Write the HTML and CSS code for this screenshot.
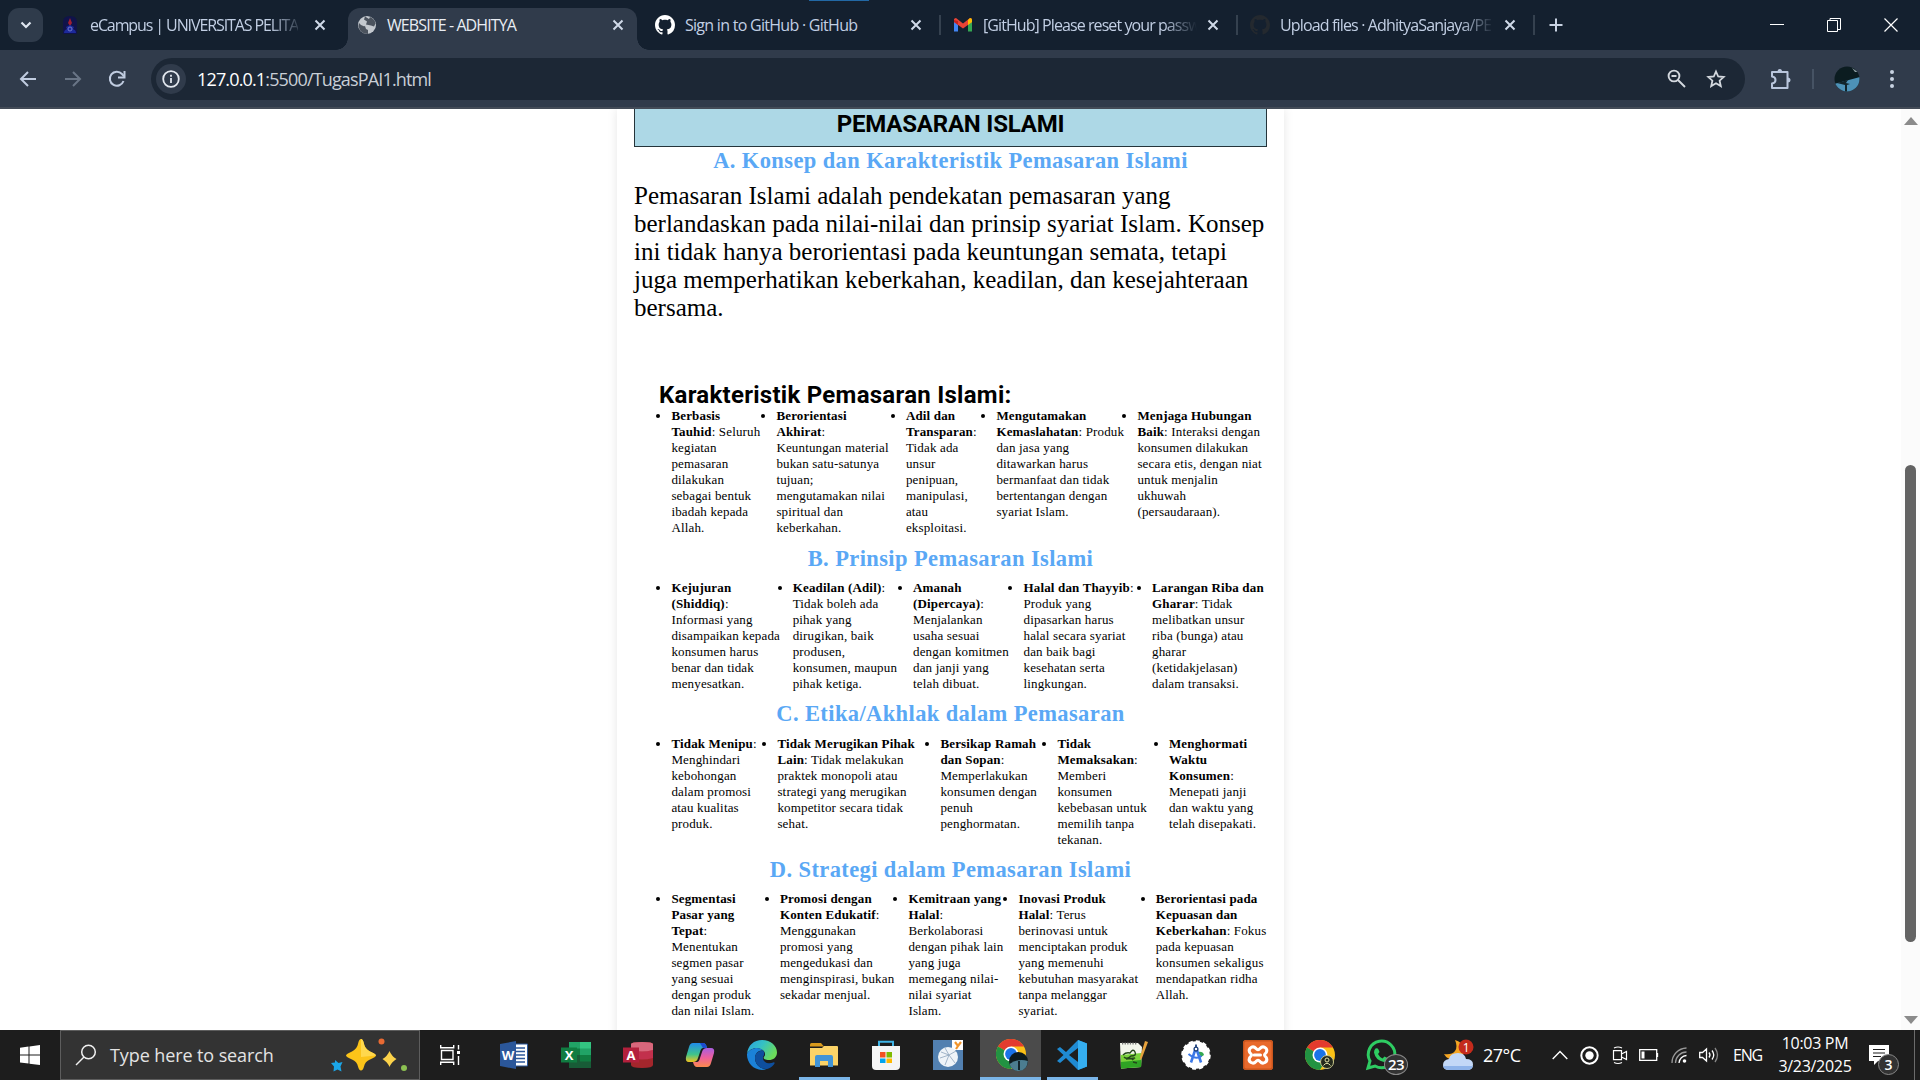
FILE: index.html
```html
<!DOCTYPE html>
<html lang="id">
<head>
<meta charset="utf-8">
<title>WEBSITE - ADHITYA</title>
<link rel="stylesheet" href="styles.css">
</head>
<body>
<svg class="defs" width="0" height="0">
  <defs>
    <symbol id="i-close" viewBox="0 0 12 12"><path d="M1.5 1.5l9 9M10.500 1.500l-9 9" fill="none" stroke="currentColor" stroke-width="2"/></symbol>
    <symbol id="i-github" viewBox="0 0 16 16"><path fill="currentColor" d="M8 0C3.580 0 0 3.580 0 8c0 3.540 2.290 6.530 5.470 7.590.4.070.55-.17.55-.38 0-.19-.01-.82-.01-1.490-2.010.37-2.530-.49-2.690-.94-.09-.23-.48-.94-.82-1.130-.28-.15-.68-.52-.01-.53.63-.01 1.080.58 1.230.82.72 1.210 1.870.87 2.330.66.070-.52.28-.87.51-1.070-1.780-.2-3.640-.89-3.640-3.950 0-.87.31-1.590.82-2.150-.08-.2-.36-1.020.08-2.120 0 0 .67-.21 2.200.82.64-.18 1.320-.27 2-.27s1.360.09 2 .27c1.530-1.040 2.200-.82 2.200-.82.44 1.100.16 1.920.08 2.120.51.56.82 1.270.82 2.150 0 3.070-1.870 3.750-3.650 3.950.29.25.54.73.54 1.480 0 1.070-.01 1.930-.01 2.200 0 .21.15.46.55.38A8.010 8.010 0 0 0 16 8c0-4.420-3.580-8-8-8z"/></symbol>
    <symbol id="i-chrome" viewBox="0 0 30 30">
      <circle cx="15" cy="15" r="15" fill="#fbc116"/>
      <path d="M15 15L2 7.500A15 15 0 0 1 28 7.500H15z" fill="#e33b2e"/>
      <path d="M15 15L2 7.500A15 15 0 0 0 15 30L21.500 18.700z" fill="#229342"/>
      <circle cx="15" cy="15" r="7.500" fill="#fff"/><circle cx="15" cy="15" r="5.900" fill="#1a73e8"/>
    </symbol>
  </defs>
</svg>

<div class="browser">
  <div class="tabstrip">
    <div class="tab-search"><svg width="12" height="8" viewBox="0 0 12 8"><path d="M1.500 1.500L6 6l4.500-4.500" fill="none" stroke="#dfe6f0" stroke-width="2.200"/></svg></div>
    <div class="tab first">
      <svg class="fav" width="20" height="20" viewBox="0 0 20 20"><path d="M3 19V7q0-6 7-6t7 6v12z" fill="#10134a"/><path d="M10 3l2 5-2 3-2-3z" fill="#a01f32"/><path d="M4 18q0-3 3-4l-1-2 4-2 4 2-1 2q3 1 3 4z" fill="#1d2a9c"/><circle cx="10" cy="14" r="2" fill="none" stroke="#7079c8"/></svg>
      <span class="title t1">eCampus | UNIVERSITAS PELITA</span><svg class="x" width="12" height="12"><use href="#i-close"/></svg>
    </div>
    <div class="tab active">
      <svg class="fav" width="20" height="20" viewBox="0 0 20 20"><circle cx="10" cy="10" r="9" fill="#c3c8ce"/><path d="M2 8q3 4 6 3l1 3 2 1v4q-8 0-9.500-8zM8 1.500l-1 3 3 2-1 3 5 1 3 1 1.500-3Q18 4 13 2l-1 2z" fill="#4b535e"/></svg>
      <span class="title t2">WEBSITE - ADHITYA</span><svg class="x" width="12" height="12"><use href="#i-close"/></svg>
    </div>
    <div class="tab"><svg class="fav white" width="20" height="20"><use href="#i-github"/></svg><span class="title t3">Sign in to GitHub · GitHub</span><svg class="x" width="12" height="12"><use href="#i-close"/></svg></div>
    <div class="tab sep">
      <svg class="fav" width="20" height="20" viewBox="0 0 20 20"><path d="M1 4v12.500h4V8z" fill="#4285f4"/><path d="M19 4v12.500h-4V8z" fill="#34a853"/><path d="M1 7V4.500Q1 3 3 3l7 5.500L17 3q2 0 2 2v2l-9 6.500z" fill="#ea4335"/><path d="M15 5l2-2q2 0 2 2v2l-4 3z" fill="#fbbc04"/><path d="M1 7V5l4 1v4z" fill="#c5221f"/></svg>
      <span class="title t4">[GitHub] Please reset your passw</span><svg class="x" width="12" height="12"><use href="#i-close"/></svg></div>
    <div class="tab sep"><svg class="fav dark" width="20" height="20"><use href="#i-github"/></svg><span class="title t5">Upload files · AdhityaSanjaya/PE</span><svg class="x" width="12" height="12"><use href="#i-close"/></svg></div>
    <div class="newtab"><svg width="14" height="14" viewBox="0 0 14 14"><path d="M7 .5v13M.5 7h13" stroke="#c8d2e2" stroke-width="2"/></svg></div>
    <div class="winbtns">
      <svg width="14" height="14" viewBox="0 0 14 14"><path d="M0 6.500h14" stroke="#fff"/></svg>
      <svg width="14" height="14" viewBox="0 0 14 14"><path d="M.5 2.500h10v11H.5zM3 2.500v-2h10.500v11H11" fill="none" stroke="#fff"/></svg>
      <svg width="14" height="14" viewBox="0 0 14 14"><path d="M.5.5l13 13M13.500.5l-13 13" stroke="#fff" stroke-width="1.200"/></svg>
    </div>
    <div class="top-mark"></div>
  </div>
  <div class="toolbar">
    <svg class="nav" width="18" height="16" viewBox="0 0 18 16"><path d="M9 1L2 8l7 7M2 8h15" fill="none" stroke="#c0cce0" stroke-width="2"/></svg>
    <svg class="nav" width="18" height="16" viewBox="0 0 18 16"><path d="M9 1l7 7-7 7M16 8H1" fill="none" stroke="#697586" stroke-width="2"/></svg>
    <svg class="nav" width="18" height="18" viewBox="0 0 18 18"><path d="M15.500 11A7 7 0 1 1 14 4l2 2.300" fill="none" stroke="#c0cce0" stroke-width="2"/><path d="M16.500 1v6.500H10" fill="none" stroke="#c0cce0" stroke-width="2"/></svg>
    <div class="omnibox">
      <div class="info"><svg width="18" height="18" viewBox="0 0 18 18"><circle cx="9" cy="9" r="7.800" fill="none" stroke="#e3e8ef" stroke-width="1.800"/><path d="M9 8v5M9 4.800v2" stroke="#e3e8ef" stroke-width="1.800"/></svg></div>
      <span class="url"><b>127.0.0.1</b>:5500/TugasPAI1.html</span>
      <svg class="zoomi" width="19" height="19" viewBox="0 0 19 19"><circle cx="7" cy="7" r="5.400" fill="none" stroke="#d3d8de" stroke-width="1.900"/><path d="M11 11l7 7M4.500 7h5" stroke="#d3d8de" stroke-width="1.900"/></svg>
      <svg width="20" height="20" viewBox="0 0 20 20"><path d="M10 2.500l2.200 5 5.500.5-4.100 3.700 1.200 5.400-4.800-2.900-4.800 2.900 1.200-5.400L2.300 8l5.500-.5z" fill="none" stroke="#d3d8de" stroke-width="1.800"/></svg>
    </div>
    <svg class="puzzle" width="22" height="22" viewBox="0 0 22 22"><path d="M2 4h15.500v16H2v-4.500q3.500-.5 3.500-3.500T2 8.500z" fill="none" stroke="#b9c6dd" stroke-width="2" stroke-linejoin="round"/><path d="M7.500 4a2.300 3 0 0 1 4.600 0zM17.500 9.500a3 2.500 0 0 1 0 5z" fill="#b9c6dd"/></svg>
    <i class="vline"></i>
    <svg class="avatar" width="26" height="26" viewBox="0 0 26 26"><defs><clipPath id="av"><circle cx="13" cy="13" r="12.500"/></clipPath></defs><g clip-path="url(#av)"><path fill="#0b1c20" d="M0 0h26v26H0z"/><path d="M0 18l26-7v15H0z" fill="#4d92b8"/><path d="M3 17l11-3-2 3 4 1-3 1v7h-2v-7z" fill="#12242b"/><path d="M18 2l6 4-3 0z" fill="#8fa0a5"/></g></svg>
    <svg class="dots" width="6" height="20" viewBox="0 0 6 20"><g fill="#c8d2e2"><circle cx="3" cy="3" r="2"/><circle cx="3" cy="10" r="2"/><circle cx="3" cy="17" r="2"/></g></svg>
  </div>
</div>

<div class="viewport">
  <main class="page">
    <h1>PEMASARAN ISLAMI</h1>
    <h2 class="lead">A. Konsep dan Karakteristik Pemasaran Islami</h2>
    <p>Pemasaran Islami adalah pendekatan pemasaran yang<br>berlandaskan pada nilai-nilai dan prinsip syariat Islam. Konsep<br>ini tidak hanya berorientasi pada keuntungan semata, tetapi<br>juga memperhatikan keberkahan, keadilan, dan kesejahteraan<br>bersama.</p>
    <h3>Karakteristik Pemasaran Islami:</h3>
    <ul class="list-a">
      <li><b>Berbasis<br>Tauhid</b>: Seluruh<br>kegiatan<br>pemasaran<br>dilakukan<br>sebagai bentuk<br>ibadah kepada<br>Allah.</li>
      <li><b>Berorientasi<br>Akhirat</b>:<br>Keuntungan material<br>bukan satu-satunya<br>tujuan;<br>mengutamakan nilai<br>spiritual dan<br>keberkahan.</li>
      <li><b>Adil dan<br>Transparan</b>:<br>Tidak ada<br>unsur<br>penipuan,<br>manipulasi,<br>atau<br>eksploitasi.</li>
      <li><b>Mengutamakan<br>Kemaslahatan</b>: Produk<br>dan jasa yang<br>ditawarkan harus<br>bermanfaat dan tidak<br>bertentangan dengan<br>syariat Islam.</li>
      <li><b>Menjaga Hubungan<br>Baik</b>: Interaksi dengan<br>konsumen dilakukan<br>secara etis, dengan niat<br>untuk menjalin<br>ukhuwah<br>(persaudaraan).</li>
    </ul>
    <h2>B. Prinsip Pemasaran Islami</h2>
    <ul class="list-b">
      <li><b>Kejujuran<br>(Shiddiq)</b>:<br>Informasi yang<br>disampaikan kepada<br>konsumen harus<br>benar dan tidak<br>menyesatkan.</li>
      <li><b>Keadilan (Adil)</b>:<br>Tidak boleh ada<br>pihak yang<br>dirugikan, baik<br>produsen,<br>konsumen, maupun<br>pihak ketiga.</li>
      <li><b>Amanah<br>(Dipercaya)</b>:<br>Menjalankan<br>usaha sesuai<br>dengan komitmen<br>dan janji yang<br>telah dibuat.</li>
      <li><b>Halal dan Thayyib</b>:<br>Produk yang<br>dipasarkan harus<br>halal secara syariat<br>dan baik bagi<br>kesehatan serta<br>lingkungan.</li>
      <li><b>Larangan Riba dan<br>Gharar</b>: Tidak<br>melibatkan unsur<br>riba (bunga) atau<br>gharar<br>(ketidakjelasan)<br>dalam transaksi.</li>
    </ul>
    <h2>C. Etika/Akhlak dalam Pemasaran</h2>
    <ul class="list-c">
      <li><b>Tidak Menipu</b>:<br>Menghindari<br>kebohongan<br>dalam promosi<br>atau kualitas<br>produk.</li>
      <li><b>Tidak Merugikan Pihak<br>Lain</b>: Tidak melakukan<br>praktek monopoli atau<br>strategi yang merugikan<br>kompetitor secara tidak<br>sehat.</li>
      <li><b>Bersikap Ramah<br>dan Sopan</b>:<br>Memperlakukan<br>konsumen dengan<br>penuh<br>penghormatan.</li>
      <li><b>Tidak<br>Memaksakan</b>:<br>Memberi<br>konsumen<br>kebebasan untuk<br>memilih tanpa<br>tekanan.</li>
      <li><b>Menghormati<br>Waktu<br>Konsumen</b>:<br>Menepati janji<br>dan waktu yang<br>telah disepakati.</li>
    </ul>
    <h2>D. Strategi dalam Pemasaran Islami</h2>
    <ul class="list-d">
      <li><b>Segmentasi<br>Pasar yang<br>Tepat</b>:<br>Menentukan<br>segmen pasar<br>yang sesuai<br>dengan produk<br>dan nilai Islam.</li>
      <li><b>Promosi dengan<br>Konten Edukatif</b>:<br>Menggunakan<br>promosi yang<br>mengedukasi dan<br>menginspirasi, bukan<br>sekadar menjual.</li>
      <li><b>Kemitraan yang<br>Halal</b>:<br>Berkolaborasi<br>dengan pihak lain<br>yang juga<br>memegang nilai-<br>nilai syariat<br>Islam.</li>
      <li><b>Inovasi Produk<br>Halal</b>: Terus<br>berinovasi untuk<br>menciptakan produk<br>yang memenuhi<br>kebutuhan masyarakat<br>tanpa melanggar<br>syariat.</li>
      <li><b>Berorientasi pada<br>Kepuasan dan<br>Keberkahan</b>: Fokus<br>pada kepuasan<br>konsumen sekaligus<br>mendapatkan ridha<br>Allah.</li>
    </ul>
  </main>
  <div class="scrollbar">
    <svg width="14" height="8" viewBox="0 0 14 8"><path d="M7 0l7 8H0z" fill="#8b8b8b"/></svg>
    <div class="thumb"></div>
    <svg width="14" height="8" viewBox="0 0 14 8"><path d="M7 8l7-8H0z" fill="#8b8b8b"/></svg>
  </div>
</div>

<div class="taskbar">
  <div class="start"><svg width="20" height="20" viewBox="0 0 20 20"><path fill="#fff" d="M0 2.800l8.500-1.200v8H0zM9.500 1.400L20 0v9.600H9.500zM0 10.600h8.500v8L0 17.400zM9.500 10.600H20V20L9.500 18.700z"/></svg></div>
  <div class="search">
    <svg width="22" height="22" viewBox="0 0 22 22"><circle cx="13.500" cy="8" r="6.800" fill="none" stroke="#f0f0f0" stroke-width="1.500"/><path d="M9 13l-8 8" stroke="#f0f0f0" stroke-width="1.500"/></svg>
    <span class="ph">Type here to search</span>
    <svg class="stars" width="78" height="34" viewBox="0 0 78 34"><path d="M30 1q2 0 3 5 1 5 6 7.500 6 2.500 6 4t-6 4q-5 2-6 7-1 4-3 4t-3-4q-1-5-6-7-6-2.500-6-4t6-4q5-2.500 6-7.500 1-5 3-5z" fill="#fcc419"/><path d="M30 1q2 0 3 5 1 5 6 7.500 6 2.500 6 4L30 19z" fill="#ffd84d"/><path d="M58.500 13q2 5 7 8-5 3-7 8-2-5-7-8 5-3 7-8z" fill="#fbd24a"/><path d="M4 22l3.500 3 4-1-2 4.500 1 5-4-2-4 2 .5-5-3-3.500 4-.5z" fill="#1ba6e8"/><circle cx="50.500" cy="3.500" r="3" fill="#e86a33"/><circle cx="73" cy="30" r="3" fill="#8cc152"/></svg>
  </div>
  <div class="app tv"><svg width="20" height="20" viewBox="0 0 20 20"><path d="M.7 0v2.700h13V0M.7 20v-2.700h13V20M1.500 5.500h11.500v9H1.500zM18.500 0v4.500M18.500 11v9" fill="none" stroke="#fff" stroke-width="1.400"/><path d="M17 6h3v3h-3z" fill="#fff"/></svg></div>
  <div class="app"><svg width="28" height="28" viewBox="0 0 28 28"><path d="M14 3h13.500v22H14z" fill="#fff" stroke="#2b579a"/><path d="M16 7h9M16 10.500h9M16 14h9M16 17.500h9M16 21h9" stroke="#2b579a" stroke-width="1.600"/><path d="M0 3l16-3v28L0 25z" fill="#2b579a"/><text x="8" y="19" class="glyph w">W</text></svg></div>
  <div class="app"><svg width="30" height="28" viewBox="0 0 30 28"><path d="M8 1h11v7H8z" fill="#21a366"/><path d="M19 1h11v7H19z" fill="#33c481"/><path d="M8 7.500h11V14H8z" fill="#107c41"/><path d="M19 7.500h11V14H19z" fill="#21a366"/><path d="M8 14h11v7H8z" fill="#185c37"/><path d="M19 14h11v7H19z" fill="#107c41"/><path d="M8 20.500h22V27H8z" fill="#185c37"/><path d="M0 6.500h16v15H0z" fill="#107c41"/><text x="8" y="19" class="glyph">X</text></svg></div>
  <div class="app"><svg width="30" height="28" viewBox="0 0 30 28"><path d="M8 3q0-2 11-2t11 2v21q0 3-11 3T8 24z" fill="#a4262c"/><path d="M8 9q11 3 22 0v8q-11 3-22 0z" fill="#c2304c"/><path d="M8 3q0-2 11-2t11 2v6q-11 3-22 0z" fill="#d9677c"/><path d="M0 6.500h16v15H0z" fill="#b3203c"/><text x="8" y="19" class="glyph">A</text></svg></div>
  <div class="app"><svg width="30" height="28" viewBox="0 0 30 28"><defs><linearGradient id="cp1" x1="0" y1="0" x2="0" y2="1"><stop offset="0" stop-color="#1f8bea"/><stop offset=".6" stop-color="#3fc48b"/><stop offset="1" stop-color="#f2c51d"/></linearGradient><linearGradient id="cp2" x1="0" y1="1" x2="0" y2="0"><stop offset="0" stop-color="#fb8a4c"/><stop offset=".5" stop-color="#ee5f9e"/><stop offset="1" stop-color="#a85ee0"/></linearGradient></defs><path d="M8 2h10q3 0 4 5h-4q-2 0-3 4l-2 6q-1 4-5 4H4q-4 0-3-5L4 6q1-4 4-4z" fill="url(#cp1)"/><path d="M22 26H12q-3 0-4-5h4q2 0 3-4l2-6q1-4 5-4h4q4 0 3 5l-3 10q-1 4-4 4z" fill="url(#cp2)"/><path d="M15 2h3q3 0 4 5h-4z" fill="#1c4bd0"/></svg></div>
  <div class="app"><svg width="30" height="30" viewBox="0 0 30 30"><defs><linearGradient id="eg" x1="0" y1="0" x2="1" y2=".5"><stop offset="0" stop-color="#2a9fe0"/><stop offset=".5" stop-color="#35c1c4"/><stop offset="1" stop-color="#6cdc5a"/></linearGradient></defs><path d="M0 14C1 5 7 0 15 0c9 0 15 6 15 12.500 0 5-4 7.500-8 7.500-5 0-6-2-5-3.200 1.500-1.600 1.500-4-.5-6C11 6 3 8 0 14z" fill="url(#eg)"/><path d="M0 14c3-6 12-8 16.500-3.200-4-1.300-8.500 2-8.500 7.200 0 6 5 11 11.500 11.300Q17 30 15 30C6 30-.5 22 0 14z" fill="#1b82d8"/><path d="M16.500 10.800C12 10 8 13 8 18c0 7 7 12.500 13 10.800 3-1 5.500-3.300 6.500-5.300.5-1-.4-1.500-1.300-1-5 2.300-10.700-.5-10.200-5 .1-2 2.500-3 .5-6.700z" fill="#0e4f9e"/></svg></div>
  <div class="app run"><svg width="28" height="24" viewBox="0 0 28 24"><path d="M0 1.500Q0 0 1.500 0H11l3 3.500H0z" fill="#d99a1c"/><path d="M0 5h12l2-2h13q1 0 1 1v18.500H0z" fill="#fbd367"/><path d="M5 14q0-2 2-2h14q2 0 2 2v10h-5v-6h-8v6H5z" fill="#4194d6"/></svg></div>
  <div class="app"><svg width="30" height="30" viewBox="0 0 30 30"><path d="M8 7V1.800h14V7" fill="none" stroke="#3fb4e6" stroke-width="2"/><path d="M1 6h28v20q0 4-4 4H5q-4 0-4-4z" fill="#f5f5f5"/><path d="M9 12h5.500v5.500H9z" fill="#f25022"/><path d="M15.500 12H21v5.500h-5.500z" fill="#7fba00"/><path d="M9 18.500h5.500V23H9z" fill="#00a4ef"/><path d="M15.500 18.500H21V23h-5.500z" fill="#ffb900"/></svg></div>
  <div class="app"><svg width="30" height="30" viewBox="0 0 30 30"><path d="M0 0h30v30H0z" fill="#5280b0"/><path d="M19 0h11v10H19z" fill="#fff"/><path d="M22 2l3 4 3-4M25 6l-2 3" fill="none" stroke="#f2952c" stroke-width="2.200"/><circle cx="15" cy="17" r="10" fill="#eef3f8"/><path d="M8 12l8 3 7-4M16 15l-4 10M16 15l6 8M7 18l9-3M12 8l4 7" stroke="#8ea4bc" stroke-width=".8" fill="none"/></svg></div>
  <div class="app run wide current"><svg width="32" height="32" viewBox="0 0 32 32"><use href="#i-chrome" width="30" height="30"/><circle cx="22.500" cy="22.500" r="9.500" fill="#0d1a1d"/><path d="M13.500 25q9-6 18.300-3-.3 9.500-9.300 10-7 0-9-7z" fill="#4c7d90"/><path d="M22 22h2v9h-2z" fill="#12242b"/></svg></div>
  <div class="app run"><svg width="30" height="30" viewBox="0 0 30 30"><path d="M21 0l9 3.500v23L21 30 9 18l-6 5-3-2 6.500-6L0 9l3-2 6 5z" fill="#1f8ad2"/><path d="M21 8v14l-9-7z" fill="#1e1e1e"/><path d="M21 0l9 3.500v23L21 30z" fill="#35aef0"/></svg></div>
  <div class="app"><svg width="30" height="30" viewBox="0 0 30 30"><path d="M1 3h18l4 4-1 20-20 1.500z" fill="#f3f6ec"/><path d="M1.700 15l21-2-.7 14-20 1.500z" fill="#7bd43c"/><path d="M1.900 22l20.500-2-.4 7-20 1.500z" fill="#2fa324"/><path d="M3 3.500h15" stroke="#777" stroke-width="2" stroke-dasharray="1.300 1.300"/><path d="M4 15q3-3 7-2 3-5 5-1t-4 4q-4 4-7 1M7 19l9-1-3 2M14 22l4 1" fill="none" stroke="#23481b" stroke-width="1.400"/><path d="M26 1l3 1-6 16-2 2v-3z" fill="#e8a33d"/></svg></div>
  <div class="app"><svg width="30" height="30" viewBox="0 0 30 30"><circle cx="15" cy="15" r="13.800" fill="#fff"/><circle cx="15" cy="15" r="13.500" fill="none" stroke="#fff" stroke-width="2.500" stroke-dasharray="4 3"/><path d="M17 12q5-1 6 3l-3 2z" fill="#34a853"/><path d="M14.300 9.500L10 22.500M15.700 9.500L20 22.500" fill="none" stroke="#3b78e7" stroke-width="2.600"/><path d="M7.500 14q7.500 6.500 13 2" fill="none" stroke="#3b78e7" stroke-width="2"/><circle cx="15" cy="9" r="1.900" fill="#fff" stroke="#1c3f7a" stroke-width="1.300"/><path d="M15 4.500v3" stroke="#1c3f7a" stroke-width="1.800"/></svg></div>
  <div class="app"><svg width="30" height="30" viewBox="0 0 30 30"><rect width="30" height="30" rx="3" fill="#e9692c"/><rect x=".7" y=".7" width="28.600" height="28.600" rx="2.500" fill="none" stroke="#c9551d" stroke-width="1.400"/><path d="M13 8.500C10 5 5 8 6.500 12c.6 1.500 2 1.800 2 3s-1.400 1.500-2 3C5 22 10 25 13 21.500q2-2.500 4 0C20 25 25 22 23.500 18c-.6-1.500-2-1.800-2-3s1.400-1.500 2-3C25 8 20 5 17 8.500q-2 2.500-4 0z" fill="none" stroke="#fff" stroke-width="3"/><path d="M11 15h6.500" stroke="#fff" stroke-width="3" stroke-linecap="round"/></svg></div>
  <div class="app"><svg width="30" height="30" viewBox="0 0 30 30"><use href="#i-chrome" width="30" height="30"/><circle cx="22" cy="22" r="6.500" fill="#24291d" stroke="#c8c88e"/><circle cx="22" cy="20" r="2" fill="none" stroke="#e2e2a8"/><path d="M18.500 25.500q3.500-4.500 7 0" fill="none" stroke="#e2e2a8"/></svg></div>
  <div class="app wa"><svg width="30" height="30" viewBox="0 0 30 30"><path d="M2 28l2-7A13.300 13.300 0 1 1 9 26z" fill="none" stroke="#2ecc62" stroke-width="3"/><path d="M9.500 8.500q2-1 3 1l1 2.500-1.500 2q1.500 3 4.500 4.500l2-2 3.500 1.700q0 3.500-4 3.800Q9.500 20.500 8 12.500q0-2.500 1.500-4z" fill="#2ecc62"/></svg><span class="badge big">23</span></div>
  <div class="weather"><svg width="32" height="32" viewBox="0 0 32 32"><path d="M13 1q3 7 0 11t-11 3q3 6 12 6 9-3 8-12-2-6-9-8z" fill="#f5a623"/><path d="M7 31q-6 0-6-5t6-6q1-6 9-6 7 0 8 6 7 0 7 5.500T25 31z" fill="#c3d8f7"/><path d="M1 27q1 4 6 4h18q5 0 6-4z" fill="#8fb4ea"/><circle cx="24" cy="8" r="7.500" fill="#c42b1c"/><text x="24" y="12.500" class="wnum">1</text></svg><span>27°C</span></div>
  <div class="tray">
    <svg width="16" height="10" viewBox="0 0 16 10"><path d="M.7 9L8 1.500 15.300 9" fill="none" stroke="#fff" stroke-width="1.400"/></svg>
    <svg width="19" height="19" viewBox="0 0 19 19"><circle cx="9.500" cy="9.500" r="8.200" fill="none" stroke="#fff" stroke-width="2"/><circle cx="9.500" cy="9.500" r="4.200" fill="#fff"/></svg>
    <svg class="cam" width="16" height="18" viewBox="0 0 16 18"><path d="M1.500 4.700h8v9h-8zM9.500 8l5-2.500v8l-5-2.500M2 2q4-2 8 0M2 16.500q4 2 8 0" fill="none" stroke="#fff" stroke-width="1.200"/></svg>
    <svg width="20" height="12" viewBox="0 0 20 12"><path d="M.7.7h17v10.600H.7zM18.500 4v4" fill="none" stroke="#fff" stroke-width="1.300"/><path d="M2.500 2.500h3v7h-3z" fill="#fff"/></svg>
    <svg width="16" height="16" viewBox="0 0 16 16"><path d="M1 16A15 15 0 0 1 15.500 1M4.500 16A11 11 0 0 1 15.500 5" fill="none" stroke="#9a9a9a" stroke-width="1.300"/><path d="M8 16A8 8 0 0 1 15.500 8.500" fill="none" stroke="#fff" stroke-width="1.300"/><circle cx="13.500" cy="14" r="1.800" fill="#fff"/></svg>
    <svg width="20" height="18" viewBox="0 0 20 18"><path d="M.7 6.500h2.800L7.500 3v12l-4-3.500H.7zM10 6.500q2 2.500 0 5M13 4.500q3.500 4.500 0 9" fill="none" stroke="#fff" stroke-width="1.300"/><path d="M16 2q5 7 0 14" fill="none" stroke="#888" stroke-width="1.300"/></svg>
    <span class="eng">ENG</span>
  </div>
  <div class="clock"><span>10:03 PM</span><span>3/23/2025</span></div>
  <div class="notif"><svg width="20" height="20" viewBox="0 0 20 20"><path d="M0 0h20v16H9l-4 4v-4H0z" fill="#fff"/><path d="M4 4.500h12M4 8h12M4 11.500h8" stroke="#1e1e1e" stroke-width="1.200"/></svg><span class="badge">3</span></div>
  <i class="peek"></i>
</div>
</body>
</html>
```
FILE: styles.css
```css
* { box-sizing: border-box; }
body { margin: 0; width: 1920px; height: 1080px; overflow: hidden; background: #fff; display: flex; flex-direction: column; font-family: "Liberation Serif", serif; color: #000; }
svg { display: block; flex: none; overflow: visible; }
.defs { position: absolute; }
.browser, .taskbar { font-family: "Open Sans", "Noto Sans", sans-serif; flex: none; }

/* tab strip */
.tabstrip { position: relative; height: 50px; background: #14202f; display: flex; padding-top: 8px; color: #c2cfe4; font-size: 16px; }
.tab-search { width: 35px; height: 34px; margin-left: 8px; border-radius: 11px; background: #2f3b4b; display: flex; align-items: center; justify-content: center; }
.tab { position: relative; width: 297px; height: 42px; display: flex; align-items: center; padding: 0 17px 8px 14px; }
.tab.first { width: 305px; padding: 0 22px 8px 17px; }
.tab.active { width: 289px; padding: 0 13px 8px 9px; background: #303b4b; border-radius: 12px 12px 0 0; color: #e9edf3; }
.tab.active::before, .tab.active::after { content: ""; position: absolute; bottom: 0; width: 12px; height: 12px; }
.tab.active::before { left: -12px; background: radial-gradient(circle at 0 0, transparent 11.500px, #303b4b 12px); }
.tab.active::after { right: -12px; background: radial-gradient(circle at 100% 0, transparent 11.500px, #303b4b 12px); }
.tab.active + .tab { padding-left: 18px; width: 302px; }
.tab.sep::before { content: ""; position: absolute; left: 0; top: 7px; width: 2px; height: 20px; background: #35414f; }
.tab .fav { margin-right: 10px; }
.tab .x { margin-left: auto; color: #d0d9e8; }
.title { white-space: nowrap; letter-spacing: -.72px; }
.t1 { letter-spacing: -1.100px; }
.t2 { letter-spacing: -.9px; }
.t4 { letter-spacing: -.92px; }
.t5 { letter-spacing: -.85px; }
.t1, .t4, .t5 { -webkit-mask-image: linear-gradient(90deg, #000 180px, transparent 214px); mask-image: linear-gradient(90deg, #000 180px, transparent 214px); }
.white { color: #fff; }
.dark { color: #24292f; }
.newtab { width: 46px; height: 34px; display: flex; align-items: center; justify-content: center; background: linear-gradient(#35414f, #35414f) 0 7px / 2px 20px no-repeat; }
.winbtns { margin-left: auto; display: flex; gap: 43px; padding: 10px 22px 0 0; }
.top-mark { position: absolute; left: 809px; top: 0; width: 60px; height: 1px; background: #2268a5; }

/* toolbar */
.toolbar { height: 59px; background: #303b4b; border-bottom: 2px solid #434b57; display: flex; align-items: center; padding: 0 25px 0 19px; }
.nav { margin-right: 27px; }
.nav + .nav { margin-right: 26px; }
.nav + .nav + .nav { margin-right: 25px; }
.omnibox { width: 1597px; height: 42px; border-radius: 21px; background: #1c2735; display: flex; align-items: center; padding: 0 19px 0 5px; color: #c9cfd7; font-size: 18px; }
.info { width: 30px; height: 30px; border-radius: 50%; background: #303b4b; display: flex; align-items: center; justify-content: center; }
.url { margin-left: 11px; margin-right: auto; letter-spacing: -.85px; }
.url b { font-weight: 400; color: #fff; }
.zoomi { margin-right: 20px; }
.puzzle { margin-left: 25px; }
.vline { width: 2px; height: 20px; margin: 0 20px; background: #465364; }
.dots { margin-left: 29px; }

/* page */
.viewport { flex: 1; min-height: 0; display: flex; overflow: hidden; }
.page { width: 667px; margin-left: 617px; height: 1000px; padding: 0 17px; box-shadow: 0 0 10px rgba(0,0,0,.1); }
h1 { margin: 0; height: 38px; border: 1px solid #25343a; border-top: 0; background: #add8e6; text-align: center; font: bold 24px/31px Roboto, "Liberation Sans", sans-serif; letter-spacing: -.2px; }
h2 { margin: 0 0 8.300px; height: 27px; text-align: center; color: #5aa8f5; font-size: 22.500px; line-height: 27px; letter-spacing: .39px; white-space: nowrap; }
h2.lead { margin-bottom: 8px; }
p { margin: 0; height: 197px; font-size: 25px; line-height: 28px; white-space: nowrap; }
h3 { margin: 0 0 0 25px; height: 29px; font: bold 24px/32px Roboto, "Liberation Sans", sans-serif; letter-spacing: .27px; white-space: nowrap; }
ul { margin: 0; padding: 0 0 0 37.400px; list-style: none; display: grid; font-size: 13px; line-height: 16px; letter-spacing: .16px; white-space: nowrap; }
li { position: relative; }
li::before { content: ""; position: absolute; left: -15px; top: 6px; width: 4px; height: 4px; border-radius: 50%; background: #000; }
.list-a { height: 137px; grid-template-columns: 105px 129.500px 90.500px 141px 1fr; }
.list-b { height: 120.200px; grid-template-columns: 121.300px 120.300px 110.500px 128.500px 1fr; }
.list-c { height: 120.200px; grid-template-columns: 106px 163px 117px 111.500px 1fr; }
.list-d { height: 144px; grid-template-columns: 108.500px 128.500px 110px 137.300px 1fr; }
.scrollbar { margin-left: auto; width: 19px; background: #fbfbfb; display: flex; flex-direction: column; align-items: center; padding: 8px 0 6px; }
.thumb { width: 11px; height: 477px; border-radius: 6px; background: #636363; margin-top: 340px; margin-bottom: auto; }

/* taskbar */
.taskbar { height: 50px; background: #1d1d1d; display: flex; align-items: center; color: #fff; }
.start { width: 60px; display: flex; justify-content: center; }
.search { width: 360px; height: 50px; background: #333; border: 1px solid #5d5d5d; display: flex; align-items: center; padding: 0 12px 0 14px; font-size: 18px; color: #e3e3e3; }
.ph { margin-left: 13px; margin-right: auto; letter-spacing: -.1px; }
.app { position: relative; width: 62px; height: 50px; display: flex; align-items: center; justify-content: center; }
.stars { margin-right: -2px; }
.tv { width: 63px; padding-right: 4px; }
.run::after { content: ""; position: absolute; left: 6px; right: 5px; bottom: 0; height: 3px; background: #7ab5e8; }
.wide::after { left: 1px; right: 0; }
.wide { padding-left: 3px; }
.wa { padding-right: 2px; }
.current { background: linear-gradient(90deg, #1d1d1d 1px, #4b4b4b 1px); }
.glyph { font: bold 13px "Open Sans", sans-serif; fill: #fff; text-anchor: middle; }
.badge { position: absolute; left: 34px; top: 24px; width: 21px; height: 21px; border-radius: 50%; background: #333; border: 1px solid #888; font-size: 14px; font-weight: 600; line-height: 19px; text-align: center; }
.badge.big { width: 24px; left: 33px; font-size: 15px; letter-spacing: -.5px; }
.weather { display: flex; align-items: center; gap: 9px; margin-left: 29px; font-size: 18px; letter-spacing: -.5px; width: 110px; }
.wnum { font-size: 12px; fill: #fff; text-anchor: middle; }
.tray { display: flex; align-items: center; gap: 12px; font-size: 16px; }
.cam { margin: 0 -1px 0 1px; }
.eng { letter-spacing: -1.200px; margin-left: 2px; }
.clock { width: 76px; margin-left: 15px; display: flex; flex-direction: column; align-items: center; font-size: 16px; line-height: 23px; letter-spacing: -.3px; white-space: nowrap; }
.notif { position: relative; margin-left: 16px; }
.notif .badge { left: 9px; top: 9px; }
.peek { width: 1px; height: 50px; margin-left: auto; margin-right: 5px; background: #6b6b6b; }
```
